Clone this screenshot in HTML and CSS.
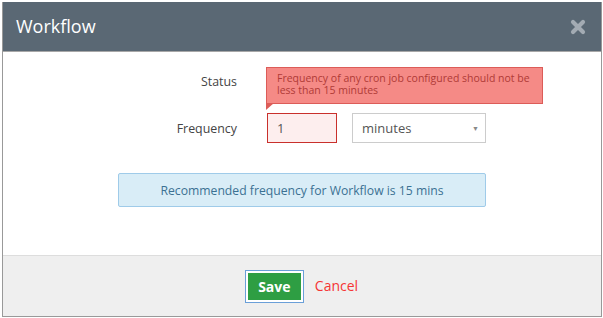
FILE: index.html
```html
<!DOCTYPE html>
<html lang="en">
<head>
	<meta charset="UTF-8">
	<title>Workflow</title>
	<link rel="stylesheet" href="styles.css">
</head>
<body>
	<div class="modal">
		<div class="modal-head">
			<h3>Workflow</h3>
			<a href="javascript:;" class="close">
				<svg width="16" height="16" viewBox="0 0 16 16"><path d="M3 3L13 13M13 3L3 13" stroke="#a3abb3" stroke-width="4.2" stroke-linecap="round"/></svg>
			</a>
		</div>
		<div class="modal-body">
			<div class="row row-status">
				<label>Status</label>
				<div class="field">
					<div class="tip">Frequency of any cron job configured should not be less than 15 minutes</div>
				</div>
			</div>
			<div class="row">
				<label>Frequency</label>
				<div class="field">
					<input type="text" class="num error" value="1">
					<div class="select">minutes<span class="caret">&#9660;</span></div>
				</div>
			</div>
			<div class="alert">Recommended frequency for Workflow is 15 mins</div>
		</div>
		<div class="modal-foot">
			<a href="javascript:;" class="btn-save">Save</a>
			<a href="javascript:;" class="btn-cancel">Cancel</a>
		</div>
	</div>
</body>
</html>
```

FILE: styles.css
```css
* {
	padding: 0;
	margin: 0;
	box-sizing: border-box;
}
a {
	text-decoration: none;
}
body {
	background: #fff;
	font-family: "Open Sans", "Liberation Sans", sans-serif;
	color: #444;
}
.modal {
	margin: 2px 1px 0 2px;
	width: 600px;
	height: 315px;
	border: 1px solid #999;
	border-top: 0;
	display: flex;
	flex-direction: column;
}
.modal-head {
	height: 50px;
	background: #5a6874;
	border-bottom: 1px solid #a7a7a7;
	display: flex;
	align-items: center;
	justify-content: space-between;
	padding: 0 15px 2px 13px;
}
.modal-head h3 {
	color: #fff;
	font-size: 18px;
	font-weight: 400;
}
.close {
	display: block;
	height: 16px;
}
.modal-body {
	flex: 1;
	background: #fff;
	padding-top: 15px;
}
.row {
	display: flex;
	align-items: center;
}
.row label {
	width: 234px;
	text-align: right;
	font-size: 12.4px;
	color: #444;
}
.field {
	margin-left: 29px;
	display: flex;
	align-items: center;
}
.row-status {
	height: 46px;
	align-items: flex-start;
}
.row-status label {
	padding-top: 6px;
}
.tip {
	position: relative;
	width: 277px;
	height: 37px;
	background: #f58a86;
	border: 1px solid #dc5c58;
	color: #b03a36;
	font-size: 10.5px;
	line-height: 12px;
	padding: 4px 10px;
}
.tip:after {
	content: '';
	position: absolute;
	left: -1px;
	bottom: -7px;
	border-left: 8px solid #dc5c58;
	border-bottom: 7px solid transparent;
}
.num {
	width: 70px;
	height: 30px;
	margin-left: 1px;
	font: 13px "Open Sans", "Liberation Sans", sans-serif;
	padding-left: 9px;
	color: #555;
	outline: none;
}
.num.error {
	border: 1px solid #c9302c;
	background: #fdeeee;
}
.select {
	margin-left: 15px;
	width: 134px;
	height: 30px;
	border: 1px solid #ccc;
	font-size: 13px;
	color: #555;
	display: flex;
	align-items: center;
	justify-content: space-between;
	padding: 0 6px 0 9px;
}
.caret {
	font-size: 7px;
	color: #888;
}
.alert {
	margin: 30px 0 0 115px;
	width: 368px;
	height: 34px;
	background: #d9edf7;
	border: 1px solid #9fcbe9;
	border-radius: 2px;
	color: #3b7193;
	font-size: 12.2px;
	display: flex;
	align-items: center;
	justify-content: center;
}
.modal-foot {
	height: 61px;
	background: #efefef;
	border-top: 1px solid #ddd;
	display: flex;
	align-items: center;
	justify-content: center;
}
.btn-save {
	width: 57px;
	height: 31px;
	background: #2e9e43;
	border: 2px solid #fff;
	outline: 1px solid #6a9fd8;
	color: #fff;
	font-weight: 700;
	font-size: 14px;
	display: flex;
	align-items: center;
	justify-content: center;
}
.btn-cancel {
	margin-left: 12px;
	color: #f53535;
	font-size: 14px;
	padding-bottom: 2px;
}
```
